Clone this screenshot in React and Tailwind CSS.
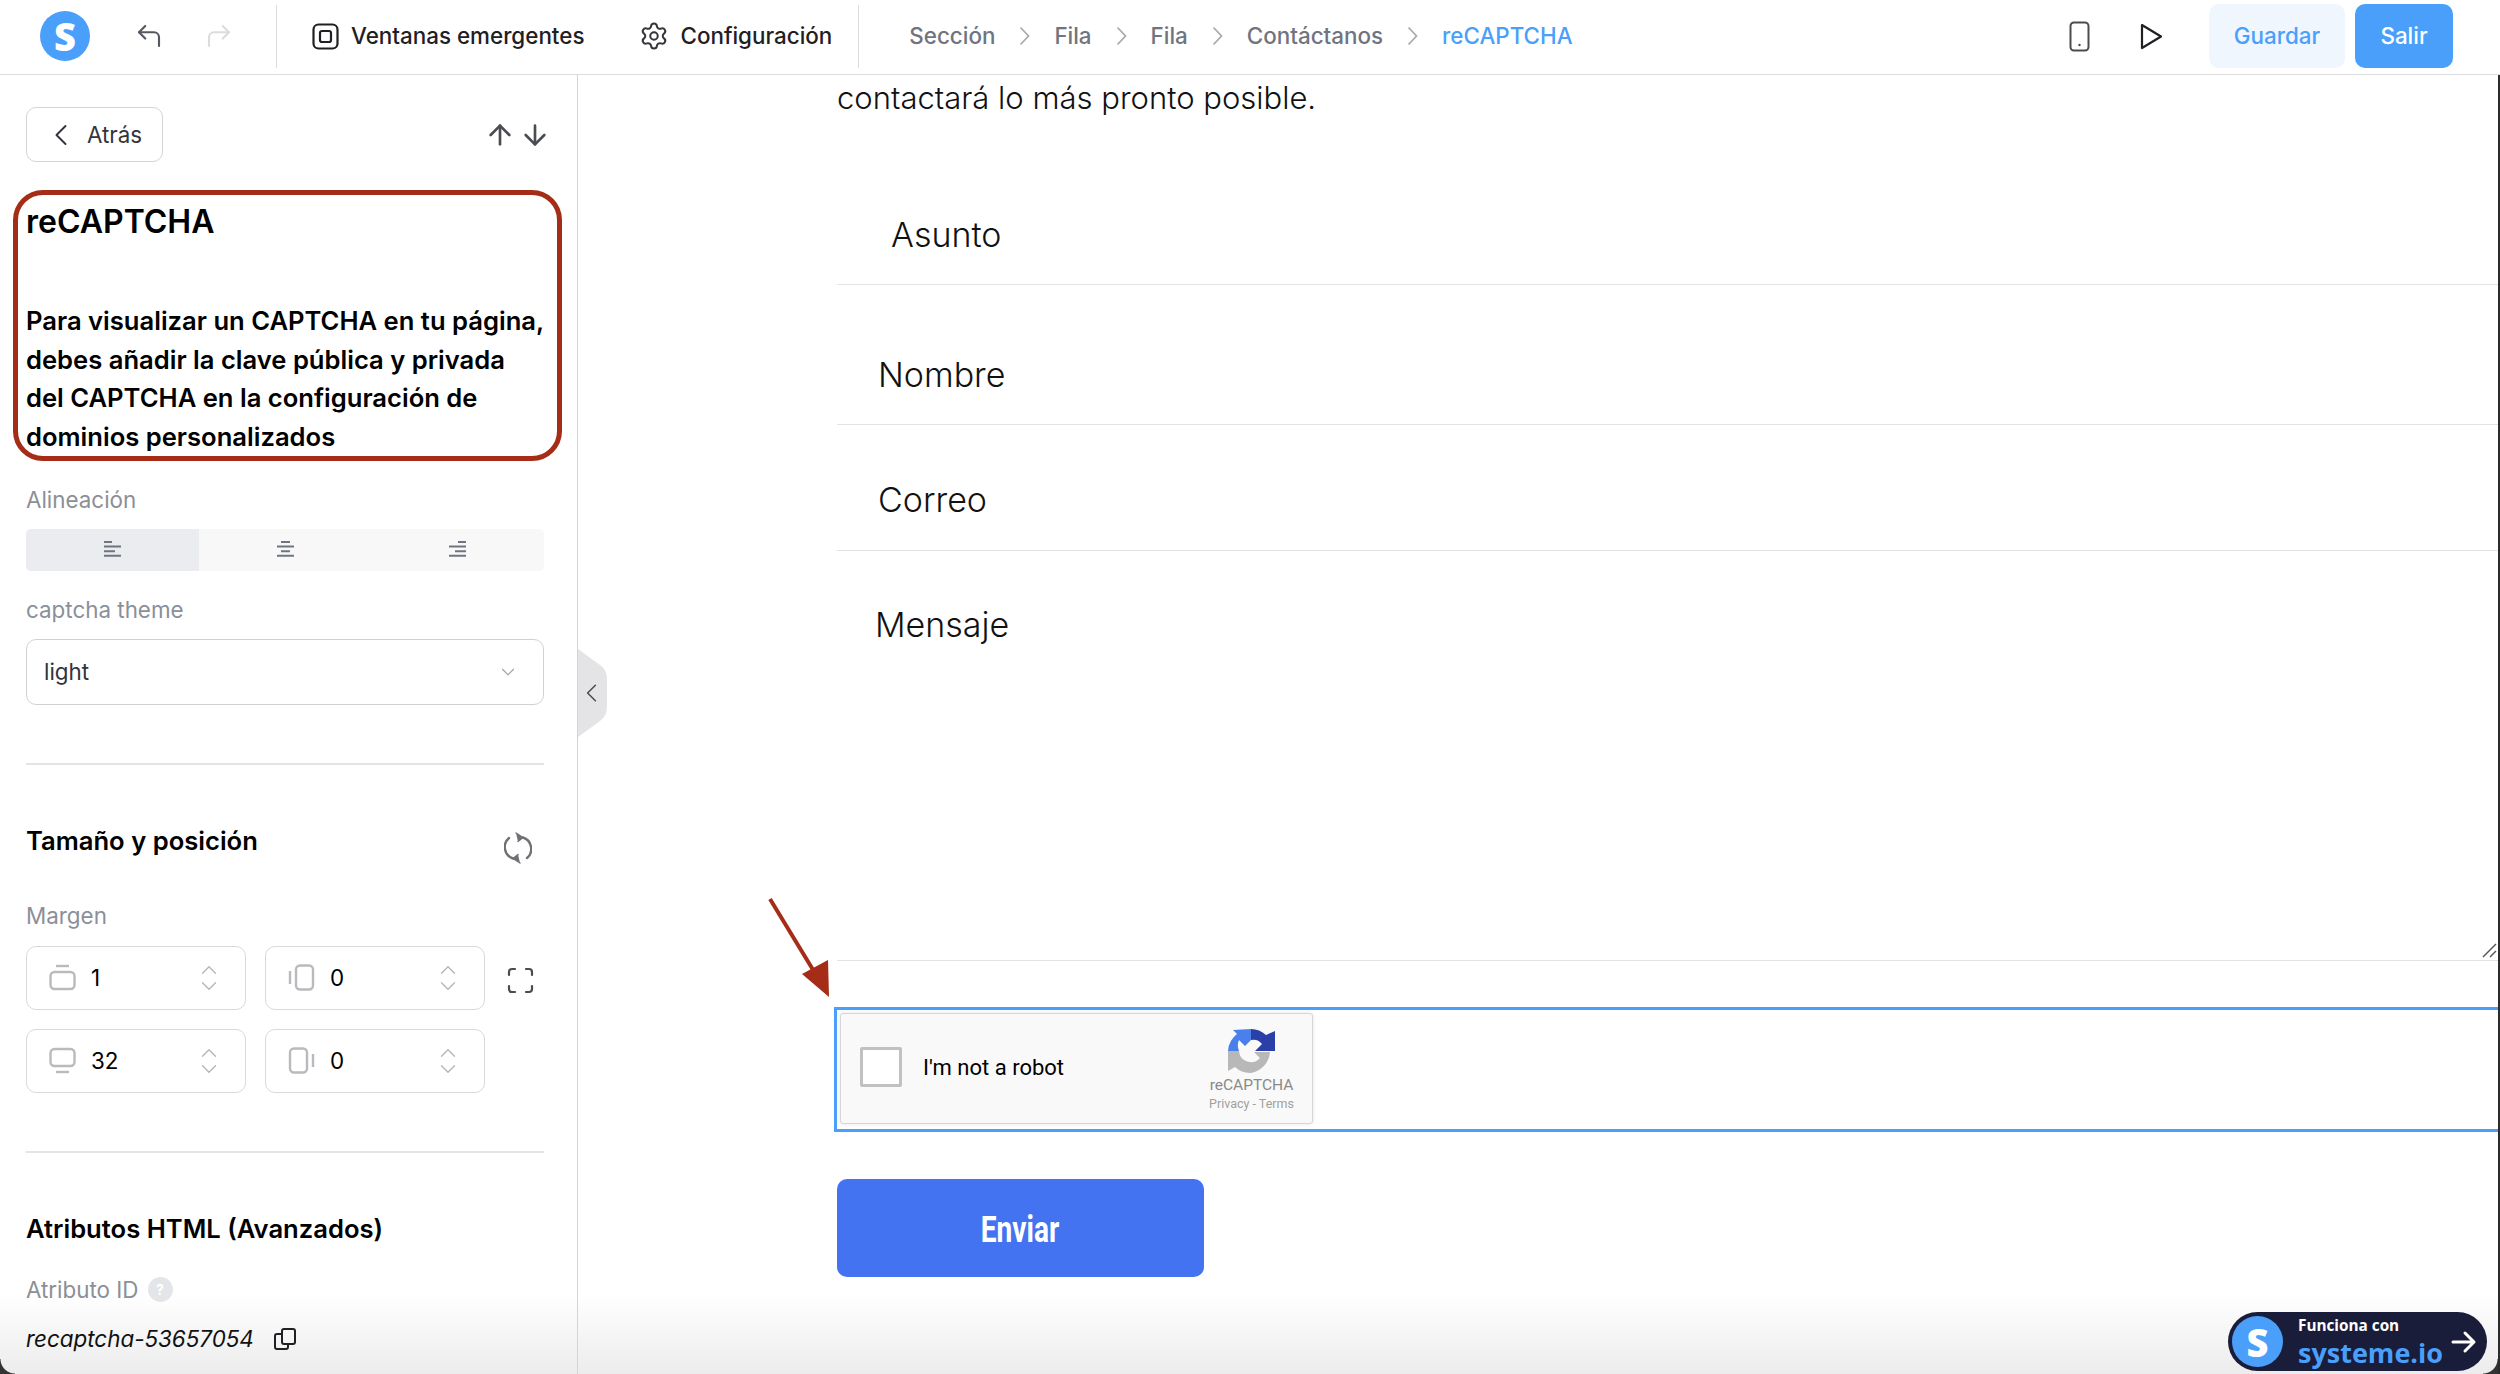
import React from "react";
import { ArrowUp, ArrowDown, ChevronLeft, ChevronDown, ChevronUp, Settings, CornerUpLeft, CornerUpRight } from "lucide-react";

const sans = "font-['Inter','Liberation_Sans',sans-serif]";
const formFont = "font-['Inter',sans-serif] font-light";

const Logo = ({ className }) => (
  <div className={`flex shrink-0 items-center justify-center rounded-full bg-[#4a9ffb] ${className}`}>
    <span className="font-['Open_Sans',sans-serif] text-[38px] leading-none font-extrabold text-white">S</span>
  </div>
);

const Crumb = ({ children, active }) => (
  <span className={active ? "text-[#4a9ffb]" : "text-[#6f7480]"}>{children}</span>
);

const Sep = () => (
  <svg className="mx-[24px]" width="11" height="20" viewBox="0 0 11 20" fill="none" stroke="#a9abb0" strokeWidth="1.8">
    <path d="M1.5 1.5 9.5 10l-8 8.5" />
  </svg>
);

const AlignIcon = ({ variant }) => {
  const xs = {
    left: [[0, 8], [0, 17], [0, 11], [0, 17]],
    center: [[4, 13], [0, 17], [4, 13], [0, 17]],
    right: [[9, 17], [0, 17], [6, 17], [0, 17]],
  }[variant];
  return (
    <svg width="17" height="18" viewBox="0 0 17 18" stroke="#6f7480" strokeWidth="2">
      {xs.map(([a, b], i) => (
        <line key={i} x1={a} x2={b} y1={1 + i * 4.6} y2={1 + i * 4.6} />
      ))}
    </svg>
  );
};

const sideIcons = {
  top: (
    <>
      <rect x="1.5" y="8" width="24" height="17" rx="4" />
      <line x1="7" x2="20" y1="2" y2="2" />
    </>
  ),
  left: (
    <>
      <rect x="8" y="1.5" width="17" height="24" rx="4" />
      <line x1="2" x2="2" y1="7" y2="20" />
    </>
  ),
  bottom: (
    <>
      <rect x="1.5" y="2" width="24" height="17" rx="4" />
      <line x1="7" x2="20" y1="25" y2="25" />
    </>
  ),
  right: (
    <>
      <rect x="2" y="1.5" width="17" height="24" rx="4" />
      <line x1="25" x2="25" y1="7" y2="20" />
    </>
  ),
};

const MarginInput = ({ icon, value }) => (
  <div className="flex h-[64px] w-[220px] items-center rounded-[10px] border border-[#d8d9dc] pl-[22px] pr-[23px]">
    <svg width="27" height="27" viewBox="0 0 27 27" fill="none" stroke="#b9babd" strokeWidth="2.4">
      {sideIcons[icon]}
    </svg>
    <span className="ml-[15px] text-[22.4px] text-black">{value}</span>
    <div className="ml-auto flex flex-col items-center text-[#b4b5b8]">
      <ChevronUp size={26} strokeWidth={1.2} className="-mb-[5px]" />
      <ChevronDown size={26} strokeWidth={1.2} className="-mt-[5px]" />
    </div>
  </div>
);

const FormField = ({ label, height, top, indent }) => (
  <div className={`flex items-center border-b border-[#e2e2e2] text-[34px] text-[#111] ${formFont} ${height} ${top} ${indent}`}>
    {label}
  </div>
);

export default function App() {
  return (
    <div className={`relative flex h-screen w-full flex-col overflow-hidden bg-white ${sans}`}>
      <div className="pointer-events-none absolute inset-x-0 bottom-0 h-[80px] bg-gradient-to-b from-transparent to-[#ececec]" />

      <header className="relative flex h-[75px] shrink-0 items-center border-b border-[#dcdcdc] pb-[2px] text-[22.4px] font-medium">
        <Logo className="ml-[40px] h-[50px] w-[50px]" />
        <CornerUpLeft className="ml-[44px] text-[#55585f]" size={30} strokeWidth={1.7} />
        <CornerUpRight className="ml-[40px] text-[#dcdcdc]" size={30} strokeWidth={1.7} />
        <div className="ml-[42px] h-[63px] w-px bg-[#dcdcdc]" />
        <svg className="ml-[35px]" width="27" height="27" viewBox="0 0 27 27" fill="none" stroke="#1f2024" strokeWidth="2.2">
          <rect x="1.5" y="1.5" width="24" height="24" rx="5" />
          <rect x="8" y="8" width="11" height="11" rx="2" />
        </svg>
        <span className="ml-[12px] text-[#1f2024]">Ventanas emergentes</span>
        <Settings className="ml-[55px] text-[#33353a]" size={30} strokeWidth={1.6} />
        <span className="ml-[11px] text-[#1f2024]">Configuración</span>
        <div className="ml-[26px] h-[63px] w-px bg-[#dcdcdc]" />
        <nav className="ml-[50px] flex items-center">
          <Crumb>Sección</Crumb>
          <Sep />
          <Crumb>Fila</Crumb>
          <Sep />
          <Crumb>Fila</Crumb>
          <Sep />
          <Crumb>Contáctanos</Crumb>
          <Sep />
          <Crumb active>reCAPTCHA</Crumb>
        </nav>
        <svg className="ml-auto" width="21" height="31" viewBox="0 0 21 31" fill="none" stroke="#4a4c52" strokeWidth="2">
          <rect x="1.5" y="1.5" width="18" height="28" rx="3.5" />
          <circle cx="10.5" cy="24" r="1.2" fill="#4a4c52" stroke="none" />
        </svg>
        <svg className="ml-[50px]" width="23" height="27" viewBox="0 0 23 27" fill="none" stroke="#1f2024" strokeWidth="2.2" strokeLinejoin="round">
          <path d="M2 2 21 13.5 2 25Z" />
        </svg>
        <button className="ml-[46px] h-[64px] w-[136px] rounded-[10px] bg-[#eff6fe] text-[#4a9ffb]">Guardar</button>
        <button className="ml-[10px] mr-[47px] h-[64px] w-[98px] rounded-[10px] bg-[#4a9ffb] text-white">Salir</button>
      </header>

      <div className="relative flex min-h-0 flex-1">
        <aside className="w-[578px] shrink-0 border-r border-[#d4d4d6] pl-[26px] pr-[33px] pt-[32px]">
          <div className="flex items-center justify-between">
            <button className="flex h-[55px] w-[137px] items-center rounded-[10px] border border-[#d4d4d6] pl-[16px] text-[22.4px] text-[#33353a]">
              <ChevronLeft size={36} strokeWidth={1.3} />
              <span className="ml-[8px]">Atrás</span>
            </button>
            <div className="-mr-[7px] flex text-[#4a4c52]">
              <ArrowUp size={32} strokeWidth={2} />
              <ArrowDown size={32} strokeWidth={2} className="ml-[3px]" />
            </div>
          </div>

          <h1 className="mt-[38px] text-[32px] leading-[44px] font-semibold text-black">reCAPTCHA</h1>
          <p className="mt-[58px] text-[25.6px] leading-[38.7px] font-semibold text-black">
            Para visualizar un CAPTCHA en tu página, debes añadir la clave pública y privada del CAPTCHA en la configuración de dominios personalizados
          </p>

          <div className="mt-[28px] text-[22.4px] leading-[30px] text-[#8b8f98]">Alineación</div>
          <div className="mt-[14px] flex h-[42px] overflow-hidden rounded-[5px] bg-[#f8f8f9]">
            <div className="flex w-[173px] items-center justify-center bg-[#ebecf0]"><AlignIcon variant="left" /></div>
            <div className="flex w-[173px] items-center justify-center"><AlignIcon variant="center" /></div>
            <div className="flex w-[173px] items-center justify-center"><AlignIcon variant="right" /></div>
          </div>

          <div className="mt-[24px] text-[22.4px] leading-[30px] text-[#8b8f98]">captcha theme</div>
          <div className="mt-[14px] flex h-[66px] items-center justify-between rounded-[10px] border border-[#d0d1d4] pl-[17px] pr-[24px] text-[22.4px] text-[#33353a]">
            light
            <ChevronDown size={22} strokeWidth={1.3} className="text-[#a6a8ad]" />
          </div>

          <div className="mt-[58px] h-[2px] bg-[#e4e4e6]" />

          <div className="mt-[58px] flex items-start justify-between">
            <h2 className="text-[25.6px] leading-[36px] font-semibold text-black">Tamaño y posición</h2>
            <svg className="mr-[12px] mt-[9px]" width="28" height="32" viewBox="0 0 28 32" fill="none" stroke="#6f7177" strokeWidth="2.4" strokeLinecap="round">
              <path d="M19 5.5A12 12 0 0 1 23 26" />
              <path d="M9 26.5A12 12 0 0 1 5 6" />
              <path d="M12 1l7 4.5-5 4" fill="#6f7177" strokeWidth="1.4" />
              <path d="M16 31l-7-4.5 5-4" fill="#6f7177" strokeWidth="1.4" />
            </svg>
          </div>

          <div className="mt-[37px] text-[22.4px] leading-[30px] text-[#8b8f98]">Margen</div>
          <div className="mt-[15px] flex items-start gap-[19px]">
            <div className="grid grid-cols-[220px_220px] gap-[19px]">
              <MarginInput icon="top" value="1" />
              <MarginInput icon="left" value="0" />
              <MarginInput icon="bottom" value="32" />
              <MarginInput icon="right" value="0" />
            </div>
            <svg className="ml-[3px] mt-[21px]" width="27" height="27" viewBox="0 0 27 27" fill="none" stroke="#4a4c52" strokeWidth="2.2" strokeLinecap="round">
              <path d="M2 8V5a3 3 0 0 1 3-3h3M19 2h3a3 3 0 0 1 3 3v3M25 19v3a3 3 0 0 1-3 3h-3M8 25H5a3 3 0 0 1-3-3v-3" />
            </svg>
          </div>

          <div className="mt-[58px] h-[2px] bg-[#e4e4e6]" />

          <h2 className="mt-[58px] text-[25.6px] leading-[36px] font-semibold text-black">Atributos HTML (Avanzados)</h2>
          <div className="mt-[28px] flex items-center text-[22.4px] leading-[30px] text-[#8b8f98]">
            Atributo ID
            <span className="ml-[9px] flex h-[25px] w-[25px] items-center justify-center rounded-full bg-[#e4e5e8] text-[14px] font-bold text-white">?</span>
          </div>
          <div className="mt-[17px] flex items-center text-[22.4px] italic text-[#111]">
            recaptcha-53657054
            <svg className="ml-[19px]" width="24" height="24" viewBox="0 0 24 24" fill="none" stroke="#1f2024" strokeWidth="2">
              <rect x="9" y="2" width="13" height="15" rx="2" />
              <path d="M9 7H4a2 2 0 0 0-2 2v11a2 2 0 0 0 2 2h9a2 2 0 0 0 2-2v-3" />
            </svg>
          </div>
        </aside>

        <main className="relative min-w-0 flex-1 overflow-hidden pl-[259px]">
          {/* collapse handle sits over the panel edge */}
          <div className="absolute left-0 top-[574px] flex h-[88px] w-[29px] items-center justify-center">
            <svg className="absolute inset-0" width="29" height="88" viewBox="0 0 29 88" fill="#e4e4e6">
              <path d="M0 0 22 16Q29 21 29 30V58Q29 67 22 72L0 88Z" />
            </svg>
            <ChevronLeft className="relative -ml-[2px] text-[#4a4c52]" size={38} strokeWidth={1.2} />
          </div>

          <p className={`text-[31px] leading-[46px] text-[#111] ${formFont}`}>contactará lo más pronto posible.</p>

          <FormField label="Asunto" height="h-[164px]" top="pt-[64px]" indent="pl-[54px]" />
          <FormField label="Nombre" height="h-[140px]" top="pt-[39px]" indent="pl-[41px]" />
          <FormField label="Correo" height="h-[126px]" top="pt-[23px]" indent="pl-[41px]" />
          <div className={`relative h-[410px] border-b border-[#e2e2e2] pl-[38px] pt-[52px] text-[34px] leading-[44px] text-[#111] ${formFont}`}>
            Mensaje
            <svg className="absolute bottom-[2px] right-[3px]" width="16" height="16" viewBox="0 0 16 16" stroke="#555" strokeWidth="1.4">
              <line x1="2" y1="15" x2="15" y2="2" />
              <line x1="9" y1="15" x2="15" y2="9" />
            </svg>
          </div>

          <div className="-ml-[3px] mt-[46px] h-[125px] border-[3px] border-r-0 border-[#4a9ffb] pl-[3px] pt-[3px]">
            <div className="flex h-[111px] w-[473px] items-center rounded-[3px] border border-[#d6d6d6] bg-[#f9f9f9] pl-[19px] pr-[18px] font-['Roboto',sans-serif] shadow-[0_0_4px_rgba(0,0,0,0.1)]">
              <div className="-mt-[3px] h-[40px] w-[42px] rounded-[2px] border-[3px] border-[#c1c1c1] bg-white" />
              <span className="ml-[21px] -mt-[3px] text-[22px] text-black">I'm not a robot</span>
              <div className="ml-auto flex flex-col items-center pt-[4px]">
                <svg width="47" height="44" viewBox="0 0 47 44" className="mb-[3px]">
                  <path d="M5 1 23 0V11L17 17 11 11A14 14 0 0 0 11 22H0A23 23 0 0 1 9 5Z" fill="#4a80ec" />
                  <path d="M23 0A23 23 0 0 1 38 6L47 2V22H27L34 15A11 11 0 0 0 23 11Z" fill="#2a3fa8" />
                  <path d="M0 22H11A12 12 0 0 0 32 29L26 23H42A23 23 0 0 1 23 44 23 23 0 0 1 7 38L0 42Z" fill="#b8b8b8" />
                </svg>
                <span className="text-[15.5px] leading-[19px] text-[#8a8a8a]">reCAPTCHA</span>
                <span className="text-[12.5px] leading-[17px] text-[#a0a0a0]">Privacy - Terms</span>
              </div>
            </div>
          </div>

          <button className="mt-[47px] flex h-[98px] w-[367px] items-center justify-center rounded-[10px] bg-[#4473f2] pt-[4px] font-['Roboto',sans-serif] text-[36.5px] font-bold text-white">
            <span className="inline-block scale-x-[0.77]">Enviar</span>
          </button>
        </main>
      </div>

      {/* annotations and overlays */}
      <div className="pointer-events-none absolute left-[13px] top-[190px] h-[271px] w-[549px] rounded-[30px] border-[5px] border-[#a52d17]" />
      <svg className="pointer-events-none absolute left-[760px] top-[890px]" width="80" height="115" viewBox="0 0 80 115" fill="#a52d17">
        <line x1="10" y1="9" x2="58" y2="88" stroke="#a52d17" strokeWidth="4" />
        <polygon points="69,107 42,84 68,70" />
      </svg>

      {/* window edge and corners of the captured screen */}
      <div className="absolute bottom-0 right-0 top-[75px] w-[2px] bg-[#2b2b2b]" />
      <div className="absolute bottom-0 left-0 h-[15px] w-[15px] bg-[radial-gradient(circle_at_100%_0%,transparent_14px,#333_15px)]" />
      <div className="absolute bottom-0 right-[2px] h-[15px] w-[15px] bg-[radial-gradient(circle_at_0%_0%,transparent_14px,#333_15px)]" />

      <div className="absolute left-[2228px] top-[1312px] flex h-[59px] w-[259px] items-center rounded-[30px] bg-[#1a1d3a] pl-[4px]">
        <Logo className="h-[51px] w-[51px]" />
        <div className="ml-[15px] flex flex-col pt-[2px] font-['Open_Sans',sans-serif] font-bold">
          <span className="text-[15.3px] leading-[20px] text-white">Funciona con</span>
          <span className="text-[27px] leading-[36px] text-[#4a9ffb]">systeme.io</span>
        </div>
        <svg className="ml-[8px]" width="26" height="24" viewBox="0 0 26 24" fill="none" stroke="#fff" strokeWidth="3" strokeLinecap="round" strokeLinejoin="round">
          <path d="M2 12h21M14 3l9 9-9 9" />
        </svg>
      </div>
    </div>
  );
}
